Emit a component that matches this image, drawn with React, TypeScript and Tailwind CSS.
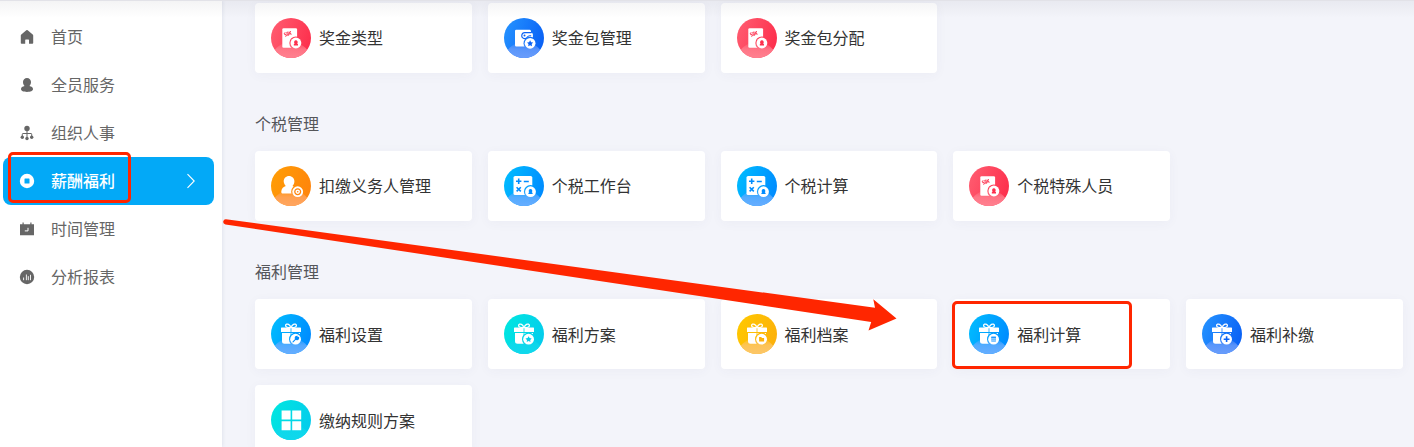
import React, { useId } from "react";

type Kind = "doc" | "wallet" | "user" | "calc" | "gift" | "grid";
type Badge = "person" | "star" | "target" | "wrench" | "folder" | "calculator" | "plus" | "none";
type Tone = "red" | "blue" | "orange" | "sky" | "cyan" | "yellow";

interface Item {
  label: string;
  kind: Kind;
  badge: Badge;
  tone: Tone;
}

const tones: Record<Tone, { from: string; to: string; glow: string }> = {
  red: { from: "#ff5c70", to: "#fd304d", glow: "#ff8190" },
  blue: { from: "#2492ff", to: "#0a62f5", glow: "#6a9dfb" },
  orange: { from: "#ff9d05", to: "#ff850c", glow: "#ffa561" },
  sky: { from: "#00bcff", to: "#008cff", glow: "#67adff" },
  cyan: { from: "#00e6e0", to: "#04cdec", glow: "#10d8ec" },
  yellow: { from: "#ffc800", to: "#fcb10a", glow: "#fcc66a" },
};

const badgeCenter: Record<Kind, [number, number]> = {
  doc: [24.9, 25],
  wallet: [26.1, 25.3],
  user: [26.7, 25.7],
  calc: [26.5, 25.7],
  gift: [24.6, 25.2],
  grid: [0, 0],
};

function Shape({ kind, ink }: { kind: Kind; ink: string }) {
  switch (kind) {
    case "doc":
      return (
        <>
          <rect x="11.3" y="10.2" width="14.8" height="19.5" rx="1.3" fill="#fff" />
          <g fill="none" stroke={ink} strokeWidth="0.8" transform="rotate(-17 16.5 16)">
            <path d="M15 14.2h-1.4v1.6H15v1.7h-1.5M16.2 14.2v3.3h1.2v-3.3zM18.7 14v3.7M20.4 14.1l-1.5 1.7 1.5 1.7" />
          </g>
        </>
      );
    case "wallet":
      return (
        <>
          <path d="M12.2 11.8h13.4q1.2 0 1.3 1.3l.3 1.6q1.7.3 1.7 1.7v12.1H12.2q-1.2 0-1.2-1.3V13q0-1.2 1.2-1.2Z" fill="#fff" />
          <path d="M27.600 14.600h-6.800a3 3 0 1 0 2.600 4.400q.8-1.300 2.300-1.300h1.500" fill="none" stroke={ink} strokeWidth="1.1" />
          <circle cx="20.5" cy="17.6" r="1" fill={ink} />
        </>
      );
    case "user":
      return (
        <path
          d="M18 9.9c3 0 5.4 2.3 5.4 5.4 0 2-.8 3.5-1.9 4.8 1.8.8 3.7 1.7 3.7 3.5v4H12c-1.3 0-1.9-.9-1.7-2.3.4-3 2.2-4.7 4.5-5.3-1.2-1.2-2.1-2.8-2.1-4.7 0-3 2.3-5.4 5.3-5.4Z"
          fill="#fff"
        />
      );
    case "calc":
      return (
        <>
          <rect x="9.5" y="10" width="18.8" height="19" rx="1.6" fill="#fff" />
          <path
            d="M12 15.3h5.4M14.7 12.6V18M19.8 15.5h5M12.6 21.2l4.2 4.2M16.8 21.2l-4.2 4.2"
            fill="none"
            stroke={ink}
            strokeWidth="1.6"
          />
        </>
      );
    case "gift":
      return (
        <>
          <path
            d="M19.6 13.5c-2.6.3-5-.3-5-2 0-1.3 1.7-1.7 2.9-1.1 1.2.6 2 1.8 2.1 3.1ZM20.4 13.5c2.6.3 5-.3 5-2 0-1.3-1.7-1.7-2.9-1.1-1.2.6-2 1.8-2.1 3.1Z"
            fill="none"
            stroke="#fff"
            strokeWidth="1.3"
          />
          <path
            d="M10.6 13.5h9v4.4H10V14q0-.5.6-.5ZM20.4 13.5h9q.6 0 .6.5v3.9h-9.6ZM11 19h8.6v10.700h-6.100q-2.500 0-2.500-2.500ZM20.400 19h8.600v10.700h-8.600Z"
            fill="#fff"
          />
        </>
      );
    case "grid":
      return (
        <path d="M10.6 10.6h9v9h-9zM21.2 10.6h9v9h-9zM10.6 21.2h9v9h-9zM21.2 21.2h9v9h-9z" fill="#fff" />
      );
  }
}

function BadgeGlyph({ badge, ink }: { badge: Badge; ink: string }) {
  switch (badge) {
    case "person":
      return (
        <path d="M0-2.700a1.900 1.900 0 0 1 1.300 3.200L2.100 1.300v1.100H-2.100V1.300L-1.300.5A1.900 1.900 0 0 1 0-2.700Z" fill={ink} />
      );
    case "star":
      return <path d="m0-3 1 1.9 2.1.3L1.6.8 1.9 2.9 0 1.9-1.9 2.9-1.6.8-3.1-.8-1-1.1Z" fill={ink} />;
    case "target":
      return (
        <>
          <circle r="2.9" fill="none" stroke={ink} strokeWidth="1.3" />
          <circle r="0.8" fill={ink} />
        </>
      );
    case "wrench":
      return (
        <path
          d="M-2.600 2.700.6-.5M3-1.700A1.700 1.700 0 1 1 1.500-3L1.300-1.300Z"
          fill={ink}
          stroke={ink}
          strokeWidth="1.1"
          strokeLinecap="round"
        />
      );
    case "folder":
      return <path d="M-2.5-2.1h2.1l.8.9h2.1v3.4h-5Z" fill={ink} />;
    case "calculator":
      return (
        <>
          <rect x="-2.4" y="-2.5" width="4.8" height="5" rx=".4" fill={ink} opacity=".65" />
          <path d="M-2.3-2h4.6" stroke={ink} strokeWidth="1" />
          <path d="M-2.3-.5h4.6M-2.3 1.1h4.6" stroke="#fff" strokeWidth=".4" />
        </>
      );
    case "plus":
      return <path d="M-2.9 0h5.8M0-2.9v5.8" stroke={ink} strokeWidth="1.6" />;
    default:
      return null;
  }
}

function ModuleIcon({ kind, badge, tone }: { kind: Kind; badge: Badge; tone: Tone }) {
  const id = useId().replace(/:/g, "");
  const c = tones[tone];
  const [bx, by] = badgeCenter[kind];
  return (
    <svg viewBox="0 0 40 40" className="size-10 shrink-0" aria-hidden="true">
      <defs>
        <linearGradient id={`${id}g`} x1="0" y1="0.2" x2="1" y2="0.55">
          <stop offset="0" stopColor={c.from} />
          <stop offset="1" stopColor={c.to} />
        </linearGradient>
        <linearGradient id={`${id}l`} x1="0" y1="0" x2="0" y2="1">
          <stop offset="0" stopColor={c.glow} stopOpacity="0.1" />
          <stop offset="0.45" stopColor={c.glow} stopOpacity="0.8" />
          <stop offset="1" stopColor={c.glow} />
        </linearGradient>
        <clipPath id={`${id}c`}>
          <circle cx="20" cy="20" r="20" />
        </clipPath>
        <mask id={`${id}m`} maskUnits="userSpaceOnUse" x="0" y="0" width="40" height="40">
          <rect width="40" height="40" fill="#fff" />
          {badge !== "none" && <circle cx={bx} cy={by} r="6.6" fill="#000" />}
        </mask>
      </defs>
      <circle cx="20" cy="20" r="20" fill={`url(#${id}g)`} />
      <path d="M4 31.500C9 26 14 24 20 24S31 26 36 31.500V40H4Z" fill={`url(#${id}l)`} clipPath={`url(#${id}c)`} />
      <g mask={`url(#${id}m)`}>
        <Shape kind={kind} ink={c.to} />
      </g>
      {badge !== "none" && (
        <g transform={`translate(${bx} ${by})`}>
          <circle r="5.4" fill="#fff" />
          <BadgeGlyph badge={badge} ink={c.to} />
        </g>
      )}
    </svg>
  );
}

function NavIcon({ name }: { name: string }) {
  const common = "size-4 shrink-0";
  switch (name) {
    case "home":
      return (
        <svg viewBox="0 0 16 16" className={common} fill="currentColor">
          <path d="M7.300 1.200q.7-.6 1.400 0l5 4.300q.5.400.5 1V14q0 .8-.8.8H10V11q0-.6-.6-.6H6.800q-.6 0-.6.6v3.800H2.600q-.8 0-.8-.8V6.500q0-.6.5-1Z" />
        </svg>
      );
    case "user":
      return (
        <svg viewBox="0 0 16 16" className={common} fill="currentColor">
          <path d="M8 1c2.300 0 4 1.700 4 4 0 1.600-.6 3-1.600 4 2.200.4 3.600 1.500 3.600 3 0 1.900-2.500 2.900-6 2.900s-6-1-6-2.900c0-1.500 1.400-2.600 3.600-3C4.600 8 4 6.600 4 5c0-2.300 1.700-4 4-4Z" />
        </svg>
      );
    case "org":
      return (
        <svg viewBox="0 0 16 16" className={common} fill="currentColor">
          <circle cx="8" cy="3.500" r="2.700" />
          <circle cx="3.300" cy="12.300" r="1.700" />
          <circle cx="8" cy="13.500" r="1.700" />
          <circle cx="12.700" cy="12.300" r="1.700" />
          <path d="M8 5.500v7M3.300 11.500V9.200q0-.7.7-.7h8q.7 0 .7.7v2.300" fill="none" stroke="currentColor" strokeWidth="1" />
        </svg>
      );
    case "pay":
      return (
        <svg viewBox="0 0 16 16" className={common} fill="currentColor" fillRule="evenodd">
          <path d="M8 .8a7.200 7.200 0 1 1 0 14.400A7.200 7.200 0 0 1 8 .8ZM6 5.500q-.5 0-.5.5v4q0 .5.5.5h4q.5 0 .5-.5V6q0-.5-.5-.5Z" />
        </svg>
      );
    case "time":
      return (
        <svg viewBox="0 0 16 16" className={common} fill="currentColor">
          <path d="M1 3.200h2.500V1.500h1.200v1.700h6.600V1.500h1.200v1.700H15v11H1Z" />
          <path d="M9 6.800v3.100H5.800" fill="none" stroke="#fff" strokeWidth="1" />
        </svg>
      );
    default:
      return (
        <svg viewBox="0 0 16 16" className={common}>
          <circle cx="8" cy="8" r="7.200" fill="currentColor" />
          <path d="M4.600 8.500v2.700M7.400 5.500v5.700M9.300 7.200v4M11.500 5.800v5.400" stroke="#fff" strokeWidth=".9" />
        </svg>
      );
  }
}

const nav = [
  { icon: "home", label: "首页" },
  { icon: "user", label: "全员服务" },
  { icon: "org", label: "组织人事" },
  { icon: "pay", label: "薪酬福利", active: true },
  { icon: "time", label: "时间管理" },
  { icon: "report", label: "分析报表" },
];

const bonus: Item[] = [
  { label: "奖金类型", kind: "doc", badge: "person", tone: "red" },
  { label: "奖金包管理", kind: "wallet", badge: "star", tone: "blue" },
  { label: "奖金包分配", kind: "doc", badge: "person", tone: "red" },
];
const tax: Item[] = [
  { label: "扣缴义务人管理", kind: "user", badge: "target", tone: "orange" },
  { label: "个税工作台", kind: "calc", badge: "person", tone: "sky" },
  { label: "个税计算", kind: "calc", badge: "person", tone: "sky" },
  { label: "个税特殊人员", kind: "doc", badge: "person", tone: "red" },
];
const welfare: Item[] = [
  { label: "福利设置", kind: "gift", badge: "wrench", tone: "sky" },
  { label: "福利方案", kind: "gift", badge: "star", tone: "cyan" },
  { label: "福利档案", kind: "gift", badge: "folder", tone: "yellow" },
  { label: "福利计算", kind: "gift", badge: "calculator", tone: "sky" },
  { label: "福利补缴", kind: "gift", badge: "plus", tone: "blue" },
  { label: "缴纳规则方案", kind: "grid", badge: "none", tone: "cyan" },
];

function CardGrid({ items }: { items: Item[] }) {
  return (
    <div className="grid grid-cols-5 gap-4">
      {items.map((item) => (
        <div
          key={item.label}
          className="flex h-[70px] items-center gap-2 rounded-[4px] bg-white px-4 shadow-[0_2px_12px_rgba(60,70,110,0.045)]"
        >
          <ModuleIcon kind={item.kind} badge={item.badge} tone={item.tone} />
          <span className="pb-[1.500px] whitespace-nowrap text-[#333]">{item.label}</span>
        </div>
      ))}
    </div>
  );
}

function Section({ title, items }: { title: string; items: Item[] }) {
  return (
    <section className="pt-[39.3px]">
      <h2 className="mb-[15px] h-6 leading-[22px] text-[#55565a]">{title}</h2>
      <CardGrid items={items} />
    </section>
  );
}

export default function App() {
  return (
    <div className="relative flex h-[447px] w-[1414px] overflow-hidden bg-[#f3f4fa] font-['Noto_Sans_CJK_SC',sans-serif] text-base">
      <nav className="z-10 flex w-[222px] shrink-0 flex-col bg-white pt-[13px] pr-2 pl-[3px] shadow-[0_0_4px_rgba(60,70,110,0.14)]">
        {nav.map((entry) => (
          <a
            key={entry.label}
            className={
              entry.active
                ? "flex h-12 items-center rounded-[8px] bg-[#03a9f7] pr-[17px] pl-4 font-medium text-white"
                : "flex h-12 items-center pr-[17px] pl-4 text-[#666]"
            }
          >
            <NavIcon name={entry.icon} />
            <span className="ml-4 flex-1 pb-[2px]">{entry.label}</span>
            {entry.active && (
              <svg viewBox="0 0 12 16" className="h-4 w-3" fill="none" stroke="currentColor" strokeWidth="1.1">
                <path d="M2.500 1.200 9.200 8l-6.700 6.800" />
              </svg>
            )}
          </a>
        ))}
      </nav>

      <main className="flex-1 pt-[2.700px] pr-[11.200px] pl-[33px]">
        <CardGrid items={bonus} />
        <Section title="个税管理" items={tax} />
        <Section title="福利管理" items={welfare} />
      </main>

      <div className="absolute inset-x-0 top-0 z-20 h-[18px] bg-linear-to-b from-[#3c3c50]/6 to-transparent" />
      <div className="absolute inset-x-0 top-0 z-20 h-px bg-[#e2e2e8]" />
      <div className="absolute top-[152px] left-[8px] z-20 h-[51px] w-[123px] rounded-[5px] border-3 border-[#ff2600]" />
      <div className="absolute top-[301px] left-[952px] z-20 h-[68px] w-[180px] rounded-[5px] border-3 border-[#ff2600]" />
      <svg viewBox="0 0 1414 447" className="absolute inset-0 z-20 h-[447px] w-[1414px]" fill="#ff2600">
        <path d="M226 219.200 875 307.800 873.300 299.300 896.500 318.600 868.500 330.600 871.200 322 225.500 224.500Q222.900 223.800 223.200 221.500 223.700 219 226 219.200Z" />
      </svg>
    </div>
  );
}
